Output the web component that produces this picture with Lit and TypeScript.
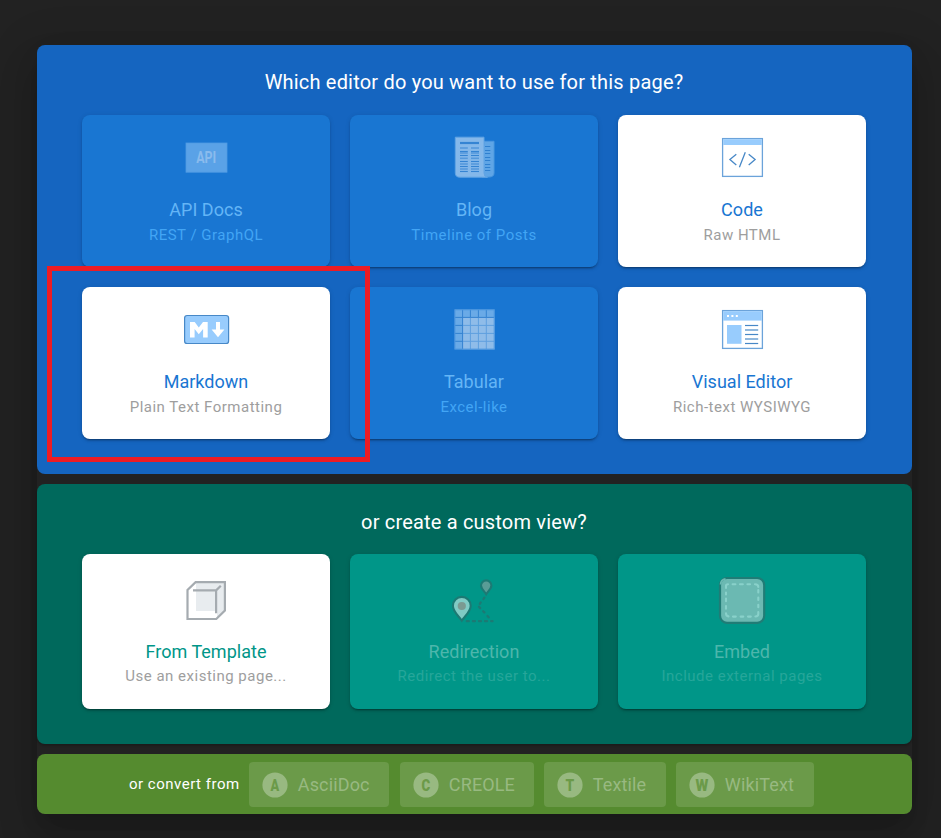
import { LitElement, html, svg, css } from "lit";
import { customElement } from "lit/decorators.js";
import { classMap } from "lit/directives/class-map.js";

const line = (x1: number, x2: number, y: number, c: string, w = 1.5) =>
  svg`<path d="M${x1} ${y}H${x2}" stroke=${c} stroke-width=${w} />`;

const icons: Record<string, unknown> = {
  api: svg`<rect x="10" y="16" width="41" height="29.2" fill="#5aa2e7" stroke="#4f9be3" stroke-width=".8"/>
    <text class="api" x="20.2" y="36.3" textLength="20" lengthAdjust="spacingAndGlyphs">API</text>`,
  blog: svg`<path d="M40 14.3H50V46Q50 50 45 50H38Z" fill="#5fa5e6" stroke="#4b98e0"/>
    <path d="M11.3 10.2H40V46Q40 50 43.5 50.2H16Q11.3 50.2 11.3 46Z" fill="#85b8ea" stroke="#61a4e4"/>
    ${line(16, 35, 16, "#3584d3", 2.2)}
    ${[21, 26, 31.3, 37, 42].map((y) => [line(16, 23.8, y, "#5599dc", 1.6), line(27, 35, y, "#5599dc", 1.6)])}
    ${[24.5, 28.5, 34.5, 39.5, 44.5].map((y) => [line(16, 23.8, y, "#3584d3", 1.1), line(27, 35, y, "#3584d3", 1.1)])}
    ${[19.5, 23.5, 26.5, 30.5, 33.5, 37.5, 40.5, 43.5].map((y) => line(41, 46.3, y, "#2f80d0", 1))}`,
  code: svg`<rect x="10.6" y="11.6" width="39.8" height="37.8" fill="#fff" stroke="#6ba3da" stroke-width="1.3"/>
    <rect x="11.2" y="12.2" width="38.6" height="5.8" fill="#98ccfd"/>
    <path d="M24.3 27.3 17.9 32.6 24.3 38M36.7 27.3 43.1 32.6 36.7 38M33.3 25.3 27.4 40.3" fill="none" stroke="#4788c7" stroke-width="1.3"/>`,
  markdown: svg`<rect x="8.6" y="16.5" width="44" height="28" rx="2.6" fill="#98ccfd" stroke="#4788c7" stroke-width="1.2"/>
    <path d="M14 38.5V23H18.7L22.8 28.4 27 23H31.7V38.5H27.1V30.1L22.8 35.3 18.6 30.1V38.5ZM40 23H44V30.5H48.4L42 38.3 35.6 30.5H40Z" fill="#fff"/>`,
  tabular: svg`<rect x="10.7" y="10.5" width="39.8" height="39.8" fill="#6aaae7"/>
    <rect x="18.6" y="18.4" width="31.9" height="31.9" fill="#8fbce9"/>
    <path d="M18.6 10.5V50.3M10.7 18.4H50.5M26.4 10.5V18.4M34.4 10.5V18.4M42.3 10.5V18.4M10.7 26.4H18.6M10.7 34.4H18.6M10.7 42.3H18.6" stroke="#3482d1"/>
    <path d="M26.4 18.9V50M34.4 18.9V50M42.3 18.9V50M19 26.4H50M19 34.4H50M19 42.3H50" stroke="#5f9fdf"/>
    <rect x="10.9" y="10.8" width="39.3" height="39.3" fill="none" stroke="#4c96df"/>`,
  visual: svg`<rect x="10.6" y="11.6" width="39.8" height="37.8" fill="#fff" stroke="#6ba3da" stroke-width="1.3"/>
    <rect x="11.2" y="12.2" width="38.6" height="9.4" fill="#98ccfd"/>
    ${[15, 19.4, 23.8].map((x) => svg`<rect x=${x} y="16" width="2" height="2" fill="#fff"/>`)}
    <rect x="15" y="26" width="14.5" height="18.8" fill="#98ccfd"/>
    ${[26.5, 31, 35.5, 40, 44.5].map((y) => line(33, 46.2, y, "#4788c7", 1.2))}`,
  template: svg`<path d="M20 12.5H48.5V40.5L41 48.5V41H20Z" fill="#e8ecef"/>
    <path d="M11.5 49V20L19.6 12.2H48.9V40.6L40.3 49Z" fill="none" stroke="#a5abb0" stroke-width="2.2"/>
    <path d="M17 20.4H40.2L44.8 15.8M40.1 20.4V43.3" fill="none" stroke="#a5abb0" stroke-width="2.2"/>`,
  redirect: svg`<path d="M17.8 50.7C15 46.4 8.9 41.8 8.9 35.8A8.9 8.9 0 0 1 26.7 35.8C26.7 41.8 20.6 46.4 17.8 50.7Z" fill="#80cbc4" stroke="#1c7a74" stroke-width="2.1"/>
    <circle cx="17.8" cy="36" r="4.1" fill="#7b9a91"/>
    <path d="M42.2 24.2C40.6 21.4 37 19 37 15.6A5.2 5.2 0 0 1 47.4 15.6C47.4 19 43.8 21.4 42.2 24.2Z" fill="#599c96" stroke="#1c7a74" stroke-width="2.1"/>
    <path d="M40.4 27.6 39.5 29M36.7 32.4 35.8 33.8M35 36.8 36.2 38.1M39.2 41.2 40.4 42.4M43.5 46 44.7 47.3M22.8 51.2H24.8M28.9 51.2H30.9M35 51.2H37M41 51.2H43M47.2 51.2H48.5" stroke="#1c7a74" stroke-width="2.3" stroke-linecap="round"/>`,
  embed: svg`<rect x="8" y="8" width="44.2" height="44.8" rx="7" fill="#6bb9b2" stroke="#207c76" stroke-width="2.2"/>
    <path d="M8.6 14.5Q8.8 9.6 13.5 8.8" fill="none" stroke="#6bb9b2" stroke-width="1.8"/>
    <path d="M14 18V16Q14 14.3 16 14.3M20.6 14.3H23.4M28 14.3H30.8M35.4 14.3H38M43 14.3Q46.3 14.3 46.3 17M46.3 20V22.5M46.3 27.5V30M46.3 34.8V37.3M46.3 42V44Q46.3 46.4 43.4 46.5M38.8 46.6H36M31.3 46.6H28.6M23.8 46.6H21M16.5 46.4Q14 46 14 43.2M14 38.8V36M14 31.3V28.5M14 24.5V22.5" fill="none" stroke="#89d1ca" stroke-width="2.1" stroke-linecap="round"/>`,
};

interface Choice {
  icon: string;
  title: string;
  note: string;
  on?: boolean;
}

const editors: Choice[] = [
  { icon: "api", title: "API Docs", note: "REST / GraphQL" },
  { icon: "blog", title: "Blog", note: "Timeline of Posts" },
  { icon: "code", title: "Code", note: "Raw HTML", on: true },
  { icon: "markdown", title: "Markdown", note: "Plain Text Formatting", on: true },
  { icon: "tabular", title: "Tabular", note: "Excel-like" },
  { icon: "visual", title: "Visual Editor", note: "Rich-text WYSIWYG", on: true },
];
const views: Choice[] = [
  { icon: "template", title: "From Template", note: "Use an existing page...", on: true },
  { icon: "redirect", title: "Redirection", note: "Redirect the user to..." },
  { icon: "embed", title: "Embed", note: "Include external pages" },
];
const formats = ["AsciiDoc", "CREOLE", "Textile", "WikiText"];

@customElement("app-root")
export class AppRoot extends LitElement {
  static styles = css`
    :host {
      display: block;
      box-sizing: border-box;
      position: relative;
      height: 838px;
      padding: 45px 29px 24px 37px;
      overflow: hidden;
      background: #222;
      font-family: Roboto, sans-serif;
      color: #fff;
    }
    .dialog {
      display: flex;
      flex-direction: column;
      gap: 10px;
      border-radius: 8px;
      box-shadow: 0 11px 15px -7px rgba(0, 0, 0, 0.1), 0 24px 38px 3px rgba(0, 0, 0, 0.14),
        0 9px 46px 8px rgba(0, 0, 0, 0.12);
    }
    .panel {
      box-sizing: border-box;
      border-radius: 8px;
      padding: 22px 46px 0 45px;
    }
    .blue { height: 429px; background: #1565c0; }
    .teal {
      height: 260px;
      padding-top: 23px;
      background: #00695c;
      box-shadow: 0 2px 2px rgba(0, 0, 0, 0.2);
    }
    .green {
      height: 60px;
      background: #558b2f;
      padding: 8px 0 0 92px;
      display: flex;
    }
    .heading {
      height: 30px;
      margin-bottom: 18px;
      line-height: 30px;
      font-size: 20px;
      letter-spacing: 0.19px;
      text-align: center;
    }
    .teal .heading { margin-bottom: 17px; }
    .grid {
      display: grid;
      grid-template-columns: repeat(3, 248px);
      grid-auto-rows: 152px;
      gap: 20px;
    }
    .teal .grid { grid-auto-rows: 155px; }
    .card {
      box-sizing: border-box;
      display: flex;
      flex-direction: column;
      align-items: center;
      padding-top: 12px;
      border-radius: 8px;
      background: #1976d2;
      box-shadow: 0 3px 1px -2px rgba(0, 0, 0, 0.2), 0 2px 2px rgba(0, 0, 0, 0.14),
        0 1px 5px rgba(0, 0, 0, 0.12);
    }
    .teal .card { background: #009688; padding-top: 16px; }
    .icon { display: block; width: 60px; height: 60px; }
    .api { font: 700 16px Roboto, sans-serif; fill: #8abbed; }
    .title {
      margin-top: 10px;
      line-height: 26px;
      font-size: 18px;
      letter-spacing: 0.02px;
      color: #64b5f6;
    }
    .teal .title { color: #4db6ac; margin-top: 9px; }
    .note {
      line-height: 24px;
      font-size: 15px;
      letter-spacing: 0.5px;
      color: #42a5f5;
    }
    .teal .note { color: #26a69a; line-height: 23px; }
    .panel .card.on { background: #fff; }
    .on .title { color: #1976d2; }
    .teal .on .title { color: #009688; }
    .panel .on .note { color: #9e9e9e; }
    .lead {
      width: 120px;
      line-height: 44px;
      font-size: 15px;
      letter-spacing: 0.5px;
    }
    .chips {
      display: grid;
      grid-template-columns: 141px 134px 122px 138px;
      column-gap: 10px;
      height: 45px;
    }
    .chip {
      display: flex;
      align-items: center;
      gap: 10px;
      padding-left: 13.3px;
      border-radius: 4px;
      background: #6b9a49;
      font-size: 18px;
      letter-spacing: 0.14px;
      color: #98b981;
    }
    .chip:first-child { margin-right: 1px; }
    .badge { width: 26px; height: 26px; margin-right: -0.5px; }
    .disc { fill: #98b981; }
    .letter { font: 900 17px Roboto, sans-serif; fill: #6b9a49; }
    .marker {
      position: absolute;
      left: 47px;
      top: 266px;
      width: 323px;
      height: 196px;
      box-sizing: border-box;
      border: 5px solid #ed1c24;
    }
  `;

  private card(c: Choice) {
    return html`<div class=${classMap({ card: true, on: !!c.on })}>
      <svg class="icon" viewBox="0 0 60 60">${icons[c.icon]}</svg>
      <div class="title">${c.title}</div>
      <div class="note">${c.note}</div>
    </div>`;
  }

  render() {
    return html`
      <div class="dialog">
        <section class="panel blue">
          <div class="heading">Which editor do you want to use for this page?</div>
          <div class="grid">${editors.map((c) => this.card(c))}</div>
        </section>
        <section class="panel teal">
          <div class="heading">or create a custom view?</div>
          <div class="grid">${views.map((c) => this.card(c))}</div>
        </section>
        <section class="panel green">
          <div class="lead">or convert from</div>
          <div class="chips">
            ${formats.map(
              (f) => html`<div class="chip">
                <svg class="badge" viewBox="0 0 26 26">
                  <circle class="disc" cx="13" cy="13" r="12.6" />
                  <text class="letter" x=${f[0] === "W" ? 6.5 : 8.6} y="19"
                    textLength=${f[0] === "W" ? 13 : 8.8} lengthAdjust="spacingAndGlyphs">${f[0]}</text>
                </svg>
                <span>${f}</span>
              </div>`
            )}
          </div>
        </section>
      </div>
      <div class="marker"></div>
    `;
  }
}
